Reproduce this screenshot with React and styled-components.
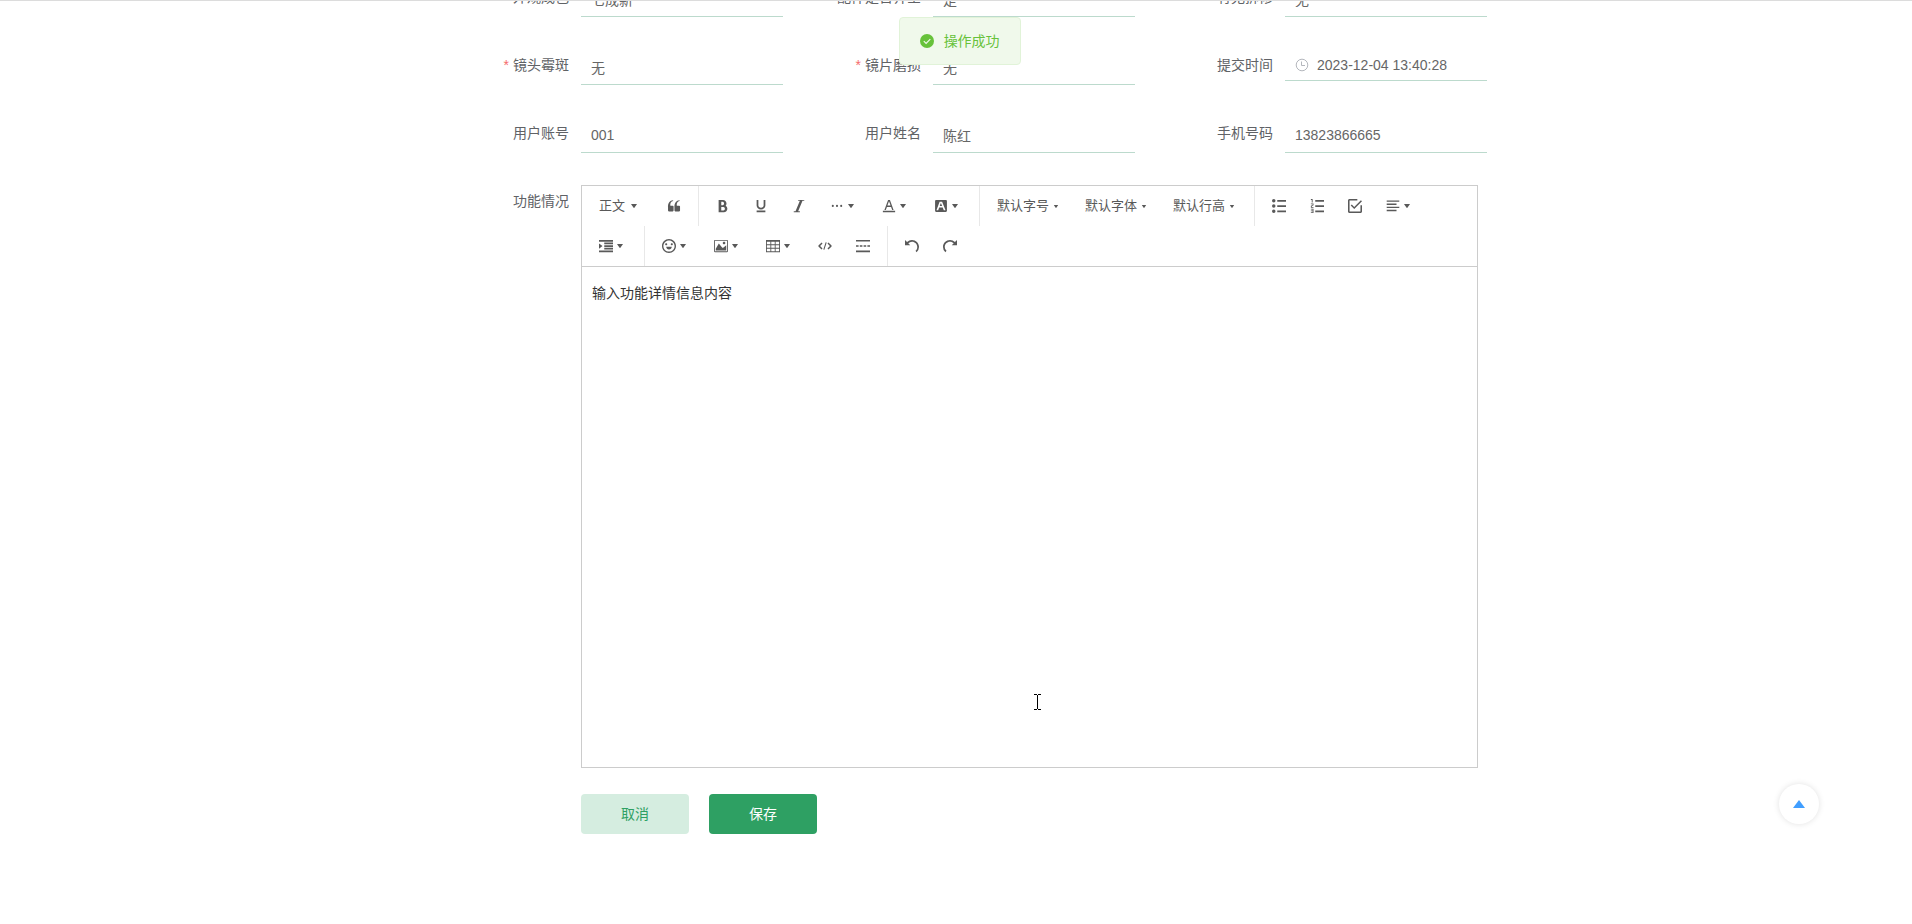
import React from "react";
import styled, { createGlobalStyle } from "styled-components";

const ICONS = {
  quote:
    "M894.6 907.1H605.4c-32.6 0-59-26.4-59-59V608.2l-4-14.9c0-315.9 125.5-485.1 376.5-507.5v59.8C752.7 180.4 711.3 315.8 711.3 442.4v41.2l31.5 12.3h151.8c32.6 0 59 26.4 59 59v293.2c0 32.5-26.4 59-59 59z m-472 0H133.4c-32.6 0-59-26.4-59-59V608.2l-4-14.9c0-315.9 125.5-485.1 376.5-507.5v59.8C280.7 180.4 239.3 315.8 239.3 442.4v41.2l31.5 12.3h151.8c32.6 0 59 26.4 59 59v293.2c0 32.5-26.4 59-59 59z",
  bold:
    "M707.872 484.64A254.88 254.88 0 0 0 768 320c0-141.152-114.848-256-256-256H192v896h384c141.152 0 256-114.848 256-256a256.096 256.096 0 0 0-124.128-219.36zM384 192h101.504c55.968 0 101.504 57.408 101.504 128s-45.536 128-101.504 128H384V192z m159.008 640H384v-256h159.008c58.464 0 106.016 57.408 106.016 128s-47.552 128-106.016 128z",
  underline:
    "M704 64l128 0 0 416c0 159.072-143.264 288-320 288s-320-128.928-320-288l0-416 128 0 0 416c0 40.16 18.24 78.688 51.36 108.512 36.896 33.216 86.848 51.488 140.64 51.488s103.744-18.304 140.64-51.488c33.12-29.792 51.36-68.352 51.36-108.512l0-416zM192 832l640 0 0 128-640 0z",
  italic: "M896 64v64h-128L448 896h128v64H128v-64h128L576 128h-128V64z",
  more:
    "M128 505.6a76.8 76.8 0 1 0 153.6 0 76.8 76.8 0 1 0-153.6 0zM435.2 505.6a76.8 76.8 0 1 0 153.6 0 76.8 76.8 0 1 0-153.6 0zM742.4 505.6a76.8 76.8 0 1 0 153.6 0 76.8 76.8 0 1 0-153.6 0z",
  color:
    "M64 864h896v96H64zM360.58 576h302.85l81.53 224h102.16L579.24 64H444.77L176.89 800h102.16l81.53-224zM512 159.96L628.49 480H395.52L512 159.96z",
  background:
    "M510 315l84.7 197h-177.2l76.8-197h15.7zM945.2 157.5v709c0 43.3-35.4 78.7-78.7 78.7h-709c-43.3 0-78.7-35.4-78.7-78.7v-709c0-43.3 35.4-78.7 78.7-78.7h709c43.3 0 78.7 35.4 78.7 78.7z m-108.3 644L600.6 216.6c-5.9-11.8-15.8-19.7-29.5-19.7h-139.8c-11.8 0-23.6 7.9-27.6 19.7l-216.6 584.9c-3.9 11.8 3.9 25.6 17.7 25.6h80.7c11.8 0 23.6-9.8 27.6-21.7l63-175.2h263.9l68.9 175.2c3.9 11.8 15.8 21.7 27.6 21.7h80.7c13.8 0 23.6-13.8 19.7-25.6z",
  bulleted:
    "M384 64h640v128H384V64z m0 384h640v128H384v-128z m0 384h640v128H384v-128zM0 128a128 128 0 1 1 256 0 128 128 0 0 1-256 0z m0 384a128 128 0 1 1 256 0 128 128 0 0 1-256 0z m0 384a128 128 0 1 1 256 0 128 128 0 0 1-256 0z",
  numbered:
    "M384 832h640v128H384z m0-384h640v128H384z m0-384h640v128H384zM192 0v256H128V64H64V0zM128 526.016v50.016h128v64H64v-146.016l128-60V384H64v-64h192v146.016zM256 704v320H64v-64h128v-64H64v-64h128v-64H64v-64z",
  todo:
    "M278.8 403.9l-79.7 79.7L455.1 739.6l568.9-568.9-79.6-79.7L455.1 580.3l-176.3-176.4zM910.2 910.2H113.8V113.8h568.9V0H113.8C51.2 0 0 51.2 0 113.8v796.4c0 62.6 51.2 113.8 113.8 113.8h796.4c62.6 0 113.8-51.2 113.8-113.8V455.1h-113.8v455.1z",
  align:
    "M768 793.6v102.4H51.2v-102.4h716.8z m204.8-230.4v102.4H51.2v-102.4h921.6z m-204.8-230.4v102.4H51.2v-102.4h716.8zM972.8 102.4v102.4H51.2V102.4h921.6z",
  indent:
    "M0 64h1024v128H0z m384 192h640v128H384z m0 192h640v128H384z m0 192h640v128H384zM0 832h1024v128H0z m0-128V320l256 192z",
  emoji:
    "M512 1024C230.4 1024 0 793.6 0 512S230.4 0 512 0s512 230.4 512 512-230.4 512-512 512z m0-102.4c226.7 0 409.6-182.9 409.6-409.6S738.7 102.4 512 102.4 102.4 285.3 102.4 512s182.9 409.6 409.6 409.6z m-204.8-358.4h409.6c0 113.4-91.4 204.8-204.8 204.8s-204.8-91.4-204.8-204.8z m0-102.4c-43.9 0-76.8-32.9-76.8-76.8s32.9-76.8 76.8-76.8 76.8 32.9 76.8 76.8-32.9 76.8-76.8 76.8z m409.6 0c-43.9 0-76.8-32.9-76.8-76.8s32.9-76.8 76.8-76.8 76.8 32.9 76.8 76.8-32.9 76.8-76.8 76.8z",
  image:
    "M959.877 128l0.123 0.123v767.775l-0.123 0.122H64.102l-0.122-0.122V128.123l0.122-0.123h895.775zM960 64H64C28.795 64 0 92.795 0 128v768c0 35.205 28.795 64 64 64h896c35.205 0 64-28.795 64-64V128c0-35.205-28.795-64-64-64zM832 288.01c0 53.023-42.988 96.01-96.01 96.01s-96.01-42.987-96.01-96.01S682.967 192 735.99 192 832 234.988 832 288.01zM896 832H128V704l224.01-384 256 320h64l224.01-192z",
  table:
    "M0 64v896h1024V64H0z m384 576v-192h256v192h-256z m256 64v192h-256v-192h256z m0-512v192h-256V192h256zM320 192v192H64V192h256z m-256 256h256v192H64v-192z m640 0h256v192h-256v-192z m0-64V192h256v192h-256zM64 704h256v192H64v-192z m640 192v-192h256v192h-256z",
  code:
    "M260 250l70 75-175 187 175 187-70 75L30 550v-76zM764 250l-70 75 175 187-175 187 70 75 230-224v-76zM560 230l75 20-170 545-75-20z",
  divider:
    "M0 64h1024v110H0zM0 850h1024v110H0zM0 457h190v110H0zM278 457h190v110H278zM556 457h190v110H556zM834 457h190v110H834z",
  undo:
    "M512 64A510.272 510.272 0 0 0 149.984 213.984L0.032 64v384h384L240.512 304.48A382.784 382.784 0 0 1 512.032 192c212.064 0 384 171.936 384 384 0 114.688-50.304 217.632-130.016 288l84.672 96a510.72 510.72 0 0 0 173.344-384c0-282.784-229.216-512-512-512z",
  redo:
    "M0 576a510.72 510.72 0 0 0 173.344 384l84.672-96A383.136 383.136 0 0 1 128 576C128 363.936 299.936 192 512 192c106.048 0 202.048 42.976 271.52 112.48L640 448h384V64l-149.984 149.984A510.272 510.272 0 0 0 512 64C229.216 64 0 293.216 0 576z",
  caret:
    "M498.7 655.8l-197.6-268c-8.1-10.9-.3-26.4 13.3-26.4h395.2c13.6 0 21.4 15.4 13.3 26.4l-197.6 268c-6.6 9-20 9-26.6 0z",
};

const tools = [
  { label: "正文", type: "heading" },
  { icon: "quote", title: "引用" },
  { divider: true },
  { icon: "bold", title: "粗体" },
  { icon: "underline", title: "下划线" },
  { icon: "italic", title: "斜体" },
  { icon: "more", title: "更多", menu: true },
  { icon: "color", title: "文字颜色", menu: true },
  { icon: "background", title: "背景色", menu: true },
  { divider: true },
  { label: "默认字号" },
  { label: "默认字体" },
  { label: "默认行高" },
  { divider: true },
  { icon: "bulleted", title: "无序列表" },
  { icon: "numbered", title: "有序列表" },
  { icon: "todo", title: "待办" },
  { icon: "align", title: "对齐", menu: true },
  { icon: "indent", title: "缩进", menu: true },
  { divider: true },
  { icon: "emoji", title: "表情", menu: true },
  { icon: "image", title: "图片", menu: true },
  { icon: "table", title: "表格", menu: true },
  { icon: "code", title: "代码块" },
  { icon: "divider", title: "分割线" },
  { divider: true },
  { icon: "undo", title: "撤销" },
  { icon: "redo", title: "重做" },
];

const fields = [
  { id: "condition", label: "外观成色", value: "七成新" },
  { id: "parts", label: "配件是否齐全", value: "是" },
  { id: "repair", label: "有无拆修", value: "无" },
  { id: "mold", label: "镜头霉斑", value: "无", required: true },
  { id: "wear", label: "镜片磨损", value: "无", required: true },
  { id: "time", label: "提交时间", value: "2023-12-04 13:40:28", date: true },
  { id: "account", label: "用户账号", value: "001" },
  { id: "username", label: "用户姓名", value: "陈红" },
  { id: "phone", label: "手机号码", value: "13823866665" },
];

function Icon({ name, size = 14 }) {
  return (
    <svg
      width={size}
      height={size}
      viewBox="0 0 1024 1024"
      fill="currentColor"
      aria-hidden="true"
    >
      <path d={ICONS[name]} />
    </svg>
  );
}

function Tool({ tool }) {
  if (tool.divider) return <ToolDivider />;
  if (tool.label) {
    const heading = tool.type === "heading";
    return (
      <ToolItem>
        <SelectButton type="button" $heading={heading}>
          <SelectText>{tool.label}</SelectText>
          <Icon name="caret" size={heading ? 14 : 11} />
        </SelectButton>
      </ToolItem>
    );
  }
  return (
    <ToolItem>
      <ToolButton type="button" aria-label={tool.title}>
        <Icon name={tool.icon} />
        {tool.menu && <Icon name="caret" />}
      </ToolButton>
    </ToolItem>
  );
}

function App() {
  return (
    <Page>
      <GlobalStyle />
      <Form onSubmit={(e) => e.preventDefault()}>
        <FieldGrid>
          {fields.map((field) => (
            <Field key={field.id}>
              <Label htmlFor={field.id} $required={field.required}>
                {field.label}
              </Label>
              <InputBox $date={field.date}>
                {field.date && (
                  <svg
                    width="14"
                    height="14"
                    viewBox="0 0 14 14"
                    fill="none"
                    stroke="#b4b7bd"
                    aria-hidden="true"
                  >
                    <circle cx="7" cy="7" r="5.8" />
                    <path d="M6.5 3.5v4h3.5" />
                  </svg>
                )}
                <Input id={field.id} defaultValue={field.value} />
              </InputBox>
            </Field>
          ))}
        </FieldGrid>

        <EditorRow>
          <Label htmlFor="detail">功能情况</Label>
          <Editor>
            <Toolbar>
              {tools.map((tool, i) => (
                <Tool key={i} tool={tool} />
              ))}
            </Toolbar>
            <TextArea id="detail" defaultValue="输入功能详情信息内容" />
          </Editor>
        </EditorRow>

        <Actions>
          <ActionButton type="button">取消</ActionButton>
          <ActionButton type="submit" $primary>
            保存
          </ActionButton>
        </Actions>
      </Form>

      <Message role="alert">
        <svg width="14" height="14" viewBox="0 0 14 14" aria-hidden="true">
          <circle cx="7" cy="7" r="7" fill="#67c23a" />
          <path
            d="M3.8 7.2l2.3 2.3 4.2-4.3"
            fill="none"
            stroke="#f0f9eb"
            strokeWidth="1.2"
          />
        </svg>
        <MessageText>操作成功</MessageText>
      </Message>

      <BackTop type="button" aria-label="回到顶部">
        <svg width="12" height="8" viewBox="0 0 12 8" aria-hidden="true">
          <path d="M6 0l6 8H0z" fill="#409eff" />
        </svg>
      </BackTop>

      <TextCursor width="8" height="16" viewBox="0 0 8 16" aria-hidden="true">
        <path d="M0 .5h3M4 .5h3M3.5 1v14M0 15.5h3M4 15.5h3" stroke="#000" />
      </TextCursor>
    </Page>
  );
}

export default App;

const GlobalStyle = createGlobalStyle`
  * {
    box-sizing: border-box;
  }
  body {
    margin: 0;
    background: #fff;
    color: #606266;
    font-family: "Liberation Sans", "Noto Sans CJK SC", sans-serif;
    font-size: 14px;
  }
  button, input, textarea {
    font-family: inherit;
  }
`;

const Page = styled.div`
  min-height: 100vh;
  border-top: 1px solid #dcdcdc;
  overflow: hidden;
`;

/* the form is scrolled, so its first row sits partly above the window */
const Form = styled.form`
  max-width: 1200px;
  margin: -24px auto 0;
  padding: 0 39px 90px 105px;
`;

const FieldGrid = styled.div`
  display: grid;
  grid-template-columns: repeat(3, minmax(0, 1fr));
  row-gap: 28px;
`;

const Field = styled.div`
  display: flex;
  height: 40px;
  padding-right: 30px;
`;

const Label = styled.label`
  flex: none;
  width: 120px;
  padding-right: 12px;
  line-height: 40px;
  text-align: right;
  white-space: nowrap;

  &::before {
    content: "${(props) => (props.$required ? "*" : "")}";
    margin-right: 4px;
    color: #f56c6c;
  }
`;

const InputBox = styled.div`
  display: flex;
  flex: 1;
  align-items: center;
  gap: 8px;
  min-width: 0;
  height: ${(props) => (props.$date ? "36px" : "40px")};
  padding: 4px 10px 0;
  border-bottom: 1px solid #bcdacd;
`;

const Input = styled.input`
  flex: 1;
  min-width: 0;
  padding: 0;
  border: 0;
  outline: 0;
  background: none;
  color: #666;
  font-size: 14px;
`;

const EditorRow = styled.div`
  display: flex;
  margin-top: 28px;
  padding-right: 39px;
`;

const Editor = styled.div`
  flex: 1;
  margin-top: 4px;
  border: 1px solid #ccc;
`;

const Toolbar = styled.div`
  display: flex;
  flex-wrap: wrap;
  padding: 0 5px;
  border-bottom: 1px solid #ccc;
`;

const ToolItem = styled.div`
  height: 40px;
  padding: 4px;
`;

const ToolDivider = styled.span`
  width: 1px;
  height: 40px;
  margin: 0 5px;
  background: #e8e8e8;
`;

const ToolButton = styled.button`
  display: flex;
  align-items: center;
  height: 32px;
  padding: 0 8px;
  border: 0;
  background: transparent;
  color: #595959;
`;

const SelectButton = styled(ToolButton)`
  gap: 2px;
  width: ${(props) => (props.$heading ? "60px" : "80px")};
  font-size: 13px;
  white-space: nowrap;
`;

const SelectText = styled.span`
  padding-bottom: 4px;
`;

const TextArea = styled.textarea`
  display: block;
  width: 100%;
  height: 500px;
  padding: 16px 10px;
  border: 0;
  outline: 0;
  resize: none;
  color: #333;
  font-size: 14px;
  line-height: 20px;
`;

const Actions = styled.div`
  display: flex;
  gap: 20px;
  margin-top: 26px;
  padding-left: 120px;
`;

const ActionButton = styled.button`
  width: 108px;
  height: 40px;
  padding: 0 0 2px;
  border: 0;
  border-radius: 4px;
  background: ${(props) => (props.$primary ? "#2ea063" : "#d5ede0")};
  color: ${(props) => (props.$primary ? "#fff" : "#2ea063")};
  font-size: 14px;
`;

const Message = styled.div`
  position: fixed;
  top: 17px;
  left: 47%;
  display: flex;
  align-items: center;
  gap: 10px;
  height: 48px;
  padding: 0 20px;
  border: 1px solid #e1f3d8;
  border-radius: 4px;
  background: #f0f9eb;
  color: #67c23a;
`;

const MessageText = styled.span`
  padding-bottom: 2px;
`;

const BackTop = styled.button`
  position: fixed;
  right: 93px;
  bottom: 100px;
  display: flex;
  align-items: center;
  justify-content: center;
  width: 40px;
  height: 40px;
  border: 0;
  border-radius: 50%;
  background: #fff;
  box-shadow: 0 0 6px rgba(0, 0, 0, 0.12);
`;

const TextCursor = styled.svg`
  position: fixed;
  top: 694px;
  left: 1034px;
`;
